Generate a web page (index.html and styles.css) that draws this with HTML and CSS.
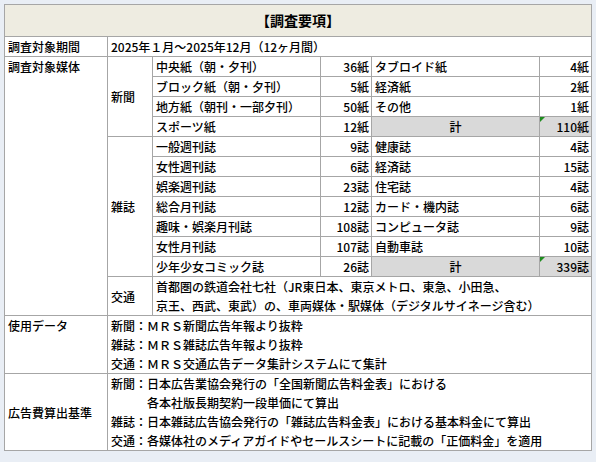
FILE: index.html
```html
<!DOCTYPE html>
<html lang="ja">
<head>
<meta charset="utf-8">
<link rel="stylesheet" href="styles.css">
</head>
<body>
<table class="spec">
<colgroup>
<col class="c1"><col class="c2"><col class="c3"><col class="c4"><col class="c5"><col class="c6">
</colgroup>
<tr class="head"><th colspan="6">【調査要項】</th></tr>
<tr><td>調査対象期間</td><td colspan="5">2025年１月～2025年12月（12ヶ月間）</td></tr>
<tr><td rowspan="12" class="top">調査対象媒体</td><td rowspan="4">新聞</td><td>中央紙（朝・夕刊）</td><td class="num">36紙</td><td>タブロイド紙</td><td class="num">4紙</td></tr>
<tr><td>ブロック紙（朝・夕刊）</td><td class="num">5紙</td><td>経済紙</td><td class="num">2紙</td></tr>
<tr><td>地方紙（朝刊・一部夕刊）</td><td class="num">50紙</td><td>その他</td><td class="num">1紙</td></tr>
<tr><td>スポーツ紙</td><td class="num">12紙</td><td class="sum">計</td><td class="num sumv"><span class="flag"></span>110紙</td></tr>
<tr><td rowspan="7">雑誌</td><td>一般週刊誌</td><td class="num">9誌</td><td>健康誌</td><td class="num">4誌</td></tr>
<tr><td>女性週刊誌</td><td class="num">6誌</td><td>経済誌</td><td class="num">15誌</td></tr>
<tr><td>娯楽週刊誌</td><td class="num">23誌</td><td>住宅誌</td><td class="num">4誌</td></tr>
<tr><td>総合月刊誌</td><td class="num">12誌</td><td>カード・機内誌</td><td class="num">6誌</td></tr>
<tr><td>趣味・娯楽月刊誌</td><td class="num">108誌</td><td>コンピュータ誌</td><td class="num">9誌</td></tr>
<tr><td>女性月刊誌</td><td class="num">107誌</td><td>自動車誌</td><td class="num">10誌</td></tr>
<tr><td>少年少女コミック誌</td><td class="num">26誌</td><td class="sum">計</td><td class="num sumv"><span class="flag"></span>339誌</td></tr>
<tr><td>交通</td><td colspan="4">首都圏の鉄道会社七社（JR東日本、東京メトロ、東急、小田急、<br>京王、西武、東武）の、車両媒体・駅媒体（デジタルサイネージ含む）</td></tr>
<tr><td class="top">使用データ</td><td colspan="5">新聞：ＭＲＳ新聞広告年報より抜粋<br>雑誌：ＭＲＳ雑誌広告年報より抜粋<br>交通：ＭＲＳ交通広告データ集計システムにて集計</td></tr>
<tr><td>広告費算出基準</td><td colspan="5">新聞：日本広告業協会発行の「全国新聞広告料金表」における<br>　　　各本社版長期契約一段単価にて算出<br>雑誌：日本雑誌広告協会発行の「雑誌広告料金表」における基本料金にて算出<br>交通：各媒体社のメディアガイドやセールスシートに記載の「正価料金」を適用</td></tr>
</table>
</body>
</html>
```

FILE: styles.css
```css
html, body {
  margin: 0;
  padding: 0;
}
body {
  background: #e9eef5;
  padding: 4px;
  font-family: "Noto Sans CJK JP", "Noto Sans", sans-serif;
  font-size: 12px;
  font-weight: 500;
  color: #000;
}
.spec {
  border-collapse: collapse;
  table-layout: fixed;
  width: 587px;
  background: #fff;
}
.c1 { width: 103px; }
.c2 { width: 45px; }
.c3 { width: 168px; }
.c4 { width: 51px; }
.c5 { width: 168px; }
.c6 { width: 52px; }
.spec th, .spec td {
  border: 1px solid #a6a6a6;
  padding: 0 3px;
  line-height: 19px;
  height: 19px;
  white-space: nowrap;
  vertical-align: middle;
  text-align: left;
  position: relative;
}
.spec tr.head th {
  background: #eeece1;
  height: 31px;
  line-height: 31px;
  text-align: center;
  font-size: 14px;
  font-weight: bold;
}
.spec td.top { vertical-align: top; }
.spec td.num { text-align: right; padding-right: 2px; }
.spec td.sum { background: #d9d9d9; text-align: center; }
.spec td.sumv { background: #d9d9d9; }
.flag {
  position: absolute;
  left: 0;
  top: 0;
  width: 0;
  height: 0;
  border-top: 5px solid #1e8c1e;
  border-right: 5px solid transparent;
}
```
